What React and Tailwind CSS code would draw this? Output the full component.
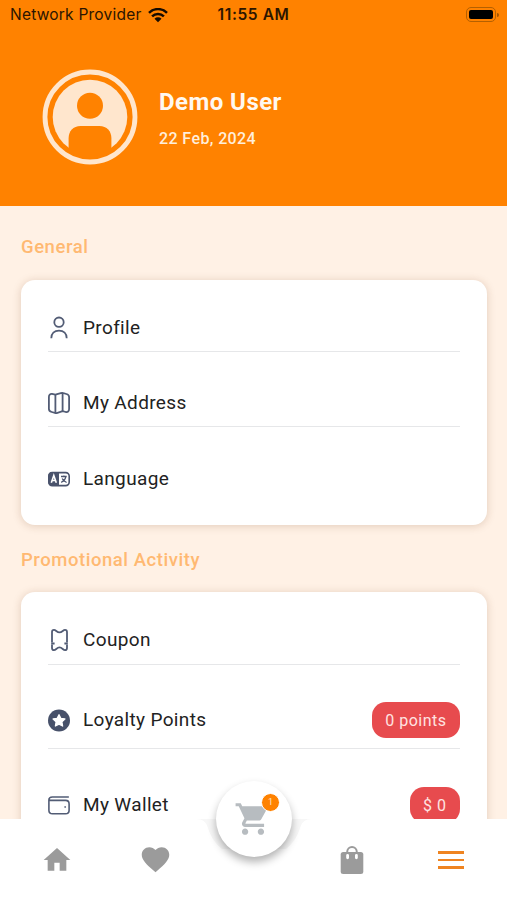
import clsx from "clsx";
import { MdFavorite, MdHome, MdShoppingCart } from "react-icons/md";

function ProfileIcon() {
  return (
    <svg width="24" height="24" viewBox="0 0 24 24" fill="none" stroke="#525c75" strokeWidth="1.8">
      <circle cx="12" cy="6.2" r="4.7" />
      <path d="M4.3 22.2c0-4.6 3-7.6 7.7-7.6s7.7 3 7.7 7.6" />
    </svg>
  );
}

function MapIcon() {
  return (
    <svg width="24" height="24" viewBox="0 0 24 24" fill="none" stroke="#525c75" strokeWidth="1.8" strokeLinejoin="round">
      <path d="M1.9 6c0-2.2 1.2-3.3 3.1-3.1l3.400.8 5.400-1.500c1-.3 1.700-.3 2.600 0l3 .8c1.700.5 2.700 1.400 2.700 3.100v12c0 2.200-1.400 3.200-3.300 2.900l-3.200-.8-5.200 1.700c-.9.300-1.600.3-2.500 0l-3.200-.9c-1.700-.5-2.800-1.400-2.800-3.100Z" />
      <path d="M8.4 3.7v18M15.6 2.2v18" />
    </svg>
  );
}

function LanguageIcon() {
  return (
    <svg width="24" height="24" viewBox="0 0 24 24" fill="none" stroke="#4a536c" strokeWidth="1.6">
      <rect x="1.8" y="5.6" width="20.4" height="13" rx="3.5" />
      <path d="M5 5h7v14H5a3.7 3.7 0 0 1-3.7-3.7V8.7A3.7 3.7 0 0 1 5 5Z" fill="#4a536c" stroke="none" />
      <path d="m4.3 15.8 2.5-7.4 2.5 7.4M5.2 13.5h3.2" stroke="#fff" />
      <path d="M14 9.5h5.7M16.9 8.5v1M18.8 9.7c-.5 2.7-2 4.5-4.6 5.7M15.2 11.5c.8 1.9 2.3 3.2 4.4 4" strokeWidth="1.3" />
    </svg>
  );
}

function CouponIcon() {
  return (
    <svg width="24" height="24" viewBox="0 0 24 24" fill="none" stroke="#525c75" strokeWidth="1.8" strokeLinejoin="round">
      <path d="M5 14.600V4c0-1.500.8-2.200 2-2.200 1.900 0 2.800 2.600 5.500 2.600s3.600-2.600 5.500-2.600c1.200 0 2 .7 2 2.200v10.600M5 16.600V20c0 1.500.8 2.200 2 2.200 1.900 0 2.800-2.800 5.500-2.800s3.600 2.800 5.500 2.800c1.200 0 2-.7 2-2.200v-3.400" />
      <path d="M4.200 15.600h3.400M17.400 15.600h3.400" strokeWidth="2" />
    </svg>
  );
}

function StarIcon() {
  return (
    <svg width="24" height="24" viewBox="0 0 24 24">
      <circle cx="12" cy="12.5" r="11" fill="#47516a" />
      <path
        d="m12 6.7 1.8 3.7 4.1.6-3 2.9.7 4.1-3.6-1.9-3.6 1.9.7-4.1-3-2.9 4.1-.6Z"
        fill="#fff"
        stroke="#fff"
        strokeWidth="1.3"
        strokeLinejoin="round"
      />
    </svg>
  );
}

function WalletIcon() {
  return (
    <svg width="24" height="24" viewBox="0 0 24 24" fill="none" stroke="#525c75" strokeWidth="1.6" strokeLinecap="round">
      <path d="M21.3 4H5.4C3 4 1.9 5.1 1.9 7v10.2c0 2.4 1.2 3.6 3.6 3.6h13c2.4 0 3.6-1.2 3.6-3.6V11c0-2.4-1.2-3.6-3.6-3.6H5.4c-2 0-3.5-.3-3.5-1.3" />
      <circle cx="18" cy="14" r=".3" strokeWidth="1" />
    </svg>
  );
}

function BagIcon() {
  return (
    <svg width="26" height="30" viewBox="0 0 26 30">
      <path d="M8.2 8V6.9a4.8 4.8 0 0 1 9.6 0V8" fill="none" stroke="#9b9b9b" strokeWidth="2" />
      <rect x="1.7" y="7" width="22.6" height="22" rx="2.5" fill="#9b9b9b" />
      <path d="M8.6 10.3v2.5M17.4 10.3v2.5" stroke="#fff" strokeWidth="2.8" strokeLinecap="round" />
    </svg>
  );
}

function WifiIcon() {
  return (
    <svg width="20" height="15" viewBox="0 0 20 15" fill="none" stroke="#160b00" strokeWidth="2.5">
      <path d="M1 4.8a12.8 12.8 0 0 1 18 0M4.1 8.3a8.4 8.4 0 0 1 11.8 0" />
      <path d="M6.5 10.8a5 5 0 0 1 7 0L10 14.2Z" fill="#160b00" stroke="none" />
    </svg>
  );
}

function Avatar() {
  return (
    <svg width="96" height="96" viewBox="0 0 96 96" className="shrink-0">
      <circle cx="48" cy="48" r="45" fill="none" stroke="#ffe6cd" strokeWidth="4.8" />
      <circle cx="48" cy="48" r="37.3" fill="#ffe6cd" />
      <circle cx="48" cy="36.7" r="13" fill="#ff8200" />
      <path d="M26.6 81V69.500c0-7.500 4.500-12.500 12-12.500h18.800c7.500 0 12 5 12 12.500V81c-7 4.500-13 6.500-21.400 6.500S33.600 85.500 26.600 81Z" fill="#ff8200" />
    </svg>
  );
}

function StatusBar() {
  return (
    <div className="grid h-[30px] grid-cols-[1fr_auto_1fr] items-center pl-[10px] pr-[8px] font-['Inter',sans-serif] text-[#2b1500]">
      <div className="flex items-center gap-[7px]">
        <span className="text-[15.5px] tracking-[0.22px]">Network Provider</span>
        <WifiIcon />
      </div>
      <span className="-mr-[2px] -ml-[4px] text-[15.5px] font-semibold tracking-[0.6px]">11:55 AM</span>
      <div className="flex items-center justify-end gap-px pb-px">
        <span className="h-[15px] w-[30px] rounded-[5px] border border-[#b56000] p-[2px]">
          <span className="block h-full w-full rounded-[2px] bg-black" />
        </span>
        <span className="h-[4px] w-[2px] rounded-r bg-[#a55500]" />
      </div>
    </div>
  );
}

function SectionTitle({ children, className }) {
  return (
    <h2 className={clsx("ml-[21px] text-[18.5px] leading-6 font-medium tracking-[0.55px] text-[#ffb972]", className)}>
      {children}
    </h2>
  );
}

function Row({ icon: Icon, label, value, last, className }) {
  return (
    <div className={clsx("flex items-center border-b", last ? "border-transparent" : "border-[#e6e7e9]", className)}>
      <span className="-ml-px">
        <Icon />
      </span>
      <span className="ml-[12px] pt-px text-[19px] tracking-[0.35px] text-[#222]">{label}</span>
      {value && (
        <span className="ml-auto flex h-[36px] items-center rounded-[14px] bg-[#e74b4e] px-[13.5px] pt-[2px] text-[16px] tracking-[0.5px] text-[#ffe3e1]">
          {value}
        </span>
      )}
    </div>
  );
}

function CartButton() {
  return (
    <>
      {/* shaded shoulders where the bar curves around the button */}
      <svg className="absolute top-0 left-[196px]" width="116" height="30" viewBox="0 0 116 30">
        <path d="M0 0h116c-7 0-10 3-12 9-3 10-8 16-14 21H26C20 25 15 19 12 9 10 3 7 0 0 0Z" fill="#f7f7f7" />
      </svg>
      <div className="absolute -top-[38px] left-[216px] flex size-[76px] items-center justify-center rounded-full bg-white shadow-[0_5px_8px_rgba(0,0,0,0.3)]">
        <MdShoppingCart className="size-[38px] -translate-x-px text-[#b7bcc0]" />
        <span className="absolute top-[12px] left-[45px] flex size-[19px] items-center justify-center rounded-full border border-white bg-[#ff8200] text-[9px] text-[#ffe3c4]">
          1
        </span>
      </div>
    </>
  );
}

function BottomNav() {
  return (
    <nav className="relative grid h-[81px] shrink-0 grid-cols-[114px_83px_113px_84px_113px] items-center justify-items-center bg-white">
      <MdHome className="size-[32px] text-[#9b9b9b]" />
      <MdFavorite className="size-[33px] text-[#9b9b9b]" />
      <CartButton />
      <span className="col-start-4">
        <BagIcon />
      </span>
      <span className="flex w-[26px] flex-col gap-[5px] pt-px">
        <span className="h-[2.5px] bg-[#ef8421]" />
        <span className="h-[2.5px] bg-[#ef8421]" />
        <span className="h-[2.5px] bg-[#ef8421]" />
      </span>
    </nav>
  );
}

export default function App() {
  return (
    <div className="flex h-[900px] w-[507px] flex-col overflow-hidden bg-[#fff1e5] font-['Roboto',sans-serif]">
      <header className="h-[206px] shrink-0 bg-[#ff8200]">
        <StatusBar />
        <div className="mt-[39px] ml-[42px] flex items-center">
          <Avatar />
          <div className="ml-[21px] pt-[2px]">
            <h1 className="text-[24px] leading-[30px] font-bold tracking-[0.45px] text-[#fff8f0]">Demo User</h1>
            <p className="mt-[12px] text-[16px] leading-5 font-medium tracking-[0.4px] text-[#ffeedb]">22 Feb, 2024</p>
          </div>
        </div>
      </header>

      <main className="min-h-0 flex-1 overflow-hidden">
        <SectionTitle className="mt-[29px]">General</SectionTitle>
        <section className="mt-[21px] mr-[20px] ml-[21px] h-[245px] rounded-[14px] bg-white px-[27px] pt-[24px] shadow-[0_1px_8px_rgba(120,70,30,0.22)]">
          <Row icon={ProfileIcon} label="Profile" className="h-[48px]" />
          <Row icon={MapIcon} label="My Address" className="mt-[27px] h-[48px]" />
          <Row icon={LanguageIcon} label="Language" last className="mt-[28px] h-[48px]" />
        </section>

        <SectionTitle className="mt-[23px]">Promotional Activity</SectionTitle>
        <section className="mt-[20px] mr-[20px] ml-[21px] h-[330px] rounded-[14px] bg-white px-[27px] pt-[24px] shadow-[0_1px_8px_rgba(120,70,30,0.22)]">
          <Row icon={CouponIcon} label="Coupon" className="h-[49px]" />
          <Row icon={StarIcon} label="Loyalty Points" value="0 points" className="mt-[27px] h-[57px]" />
          <Row icon={WalletIcon} label="My Wallet" value="$ 0" className="mt-[28px] h-[57px]" />
        </section>
      </main>

      <BottomNav />
    </div>
  );
}
